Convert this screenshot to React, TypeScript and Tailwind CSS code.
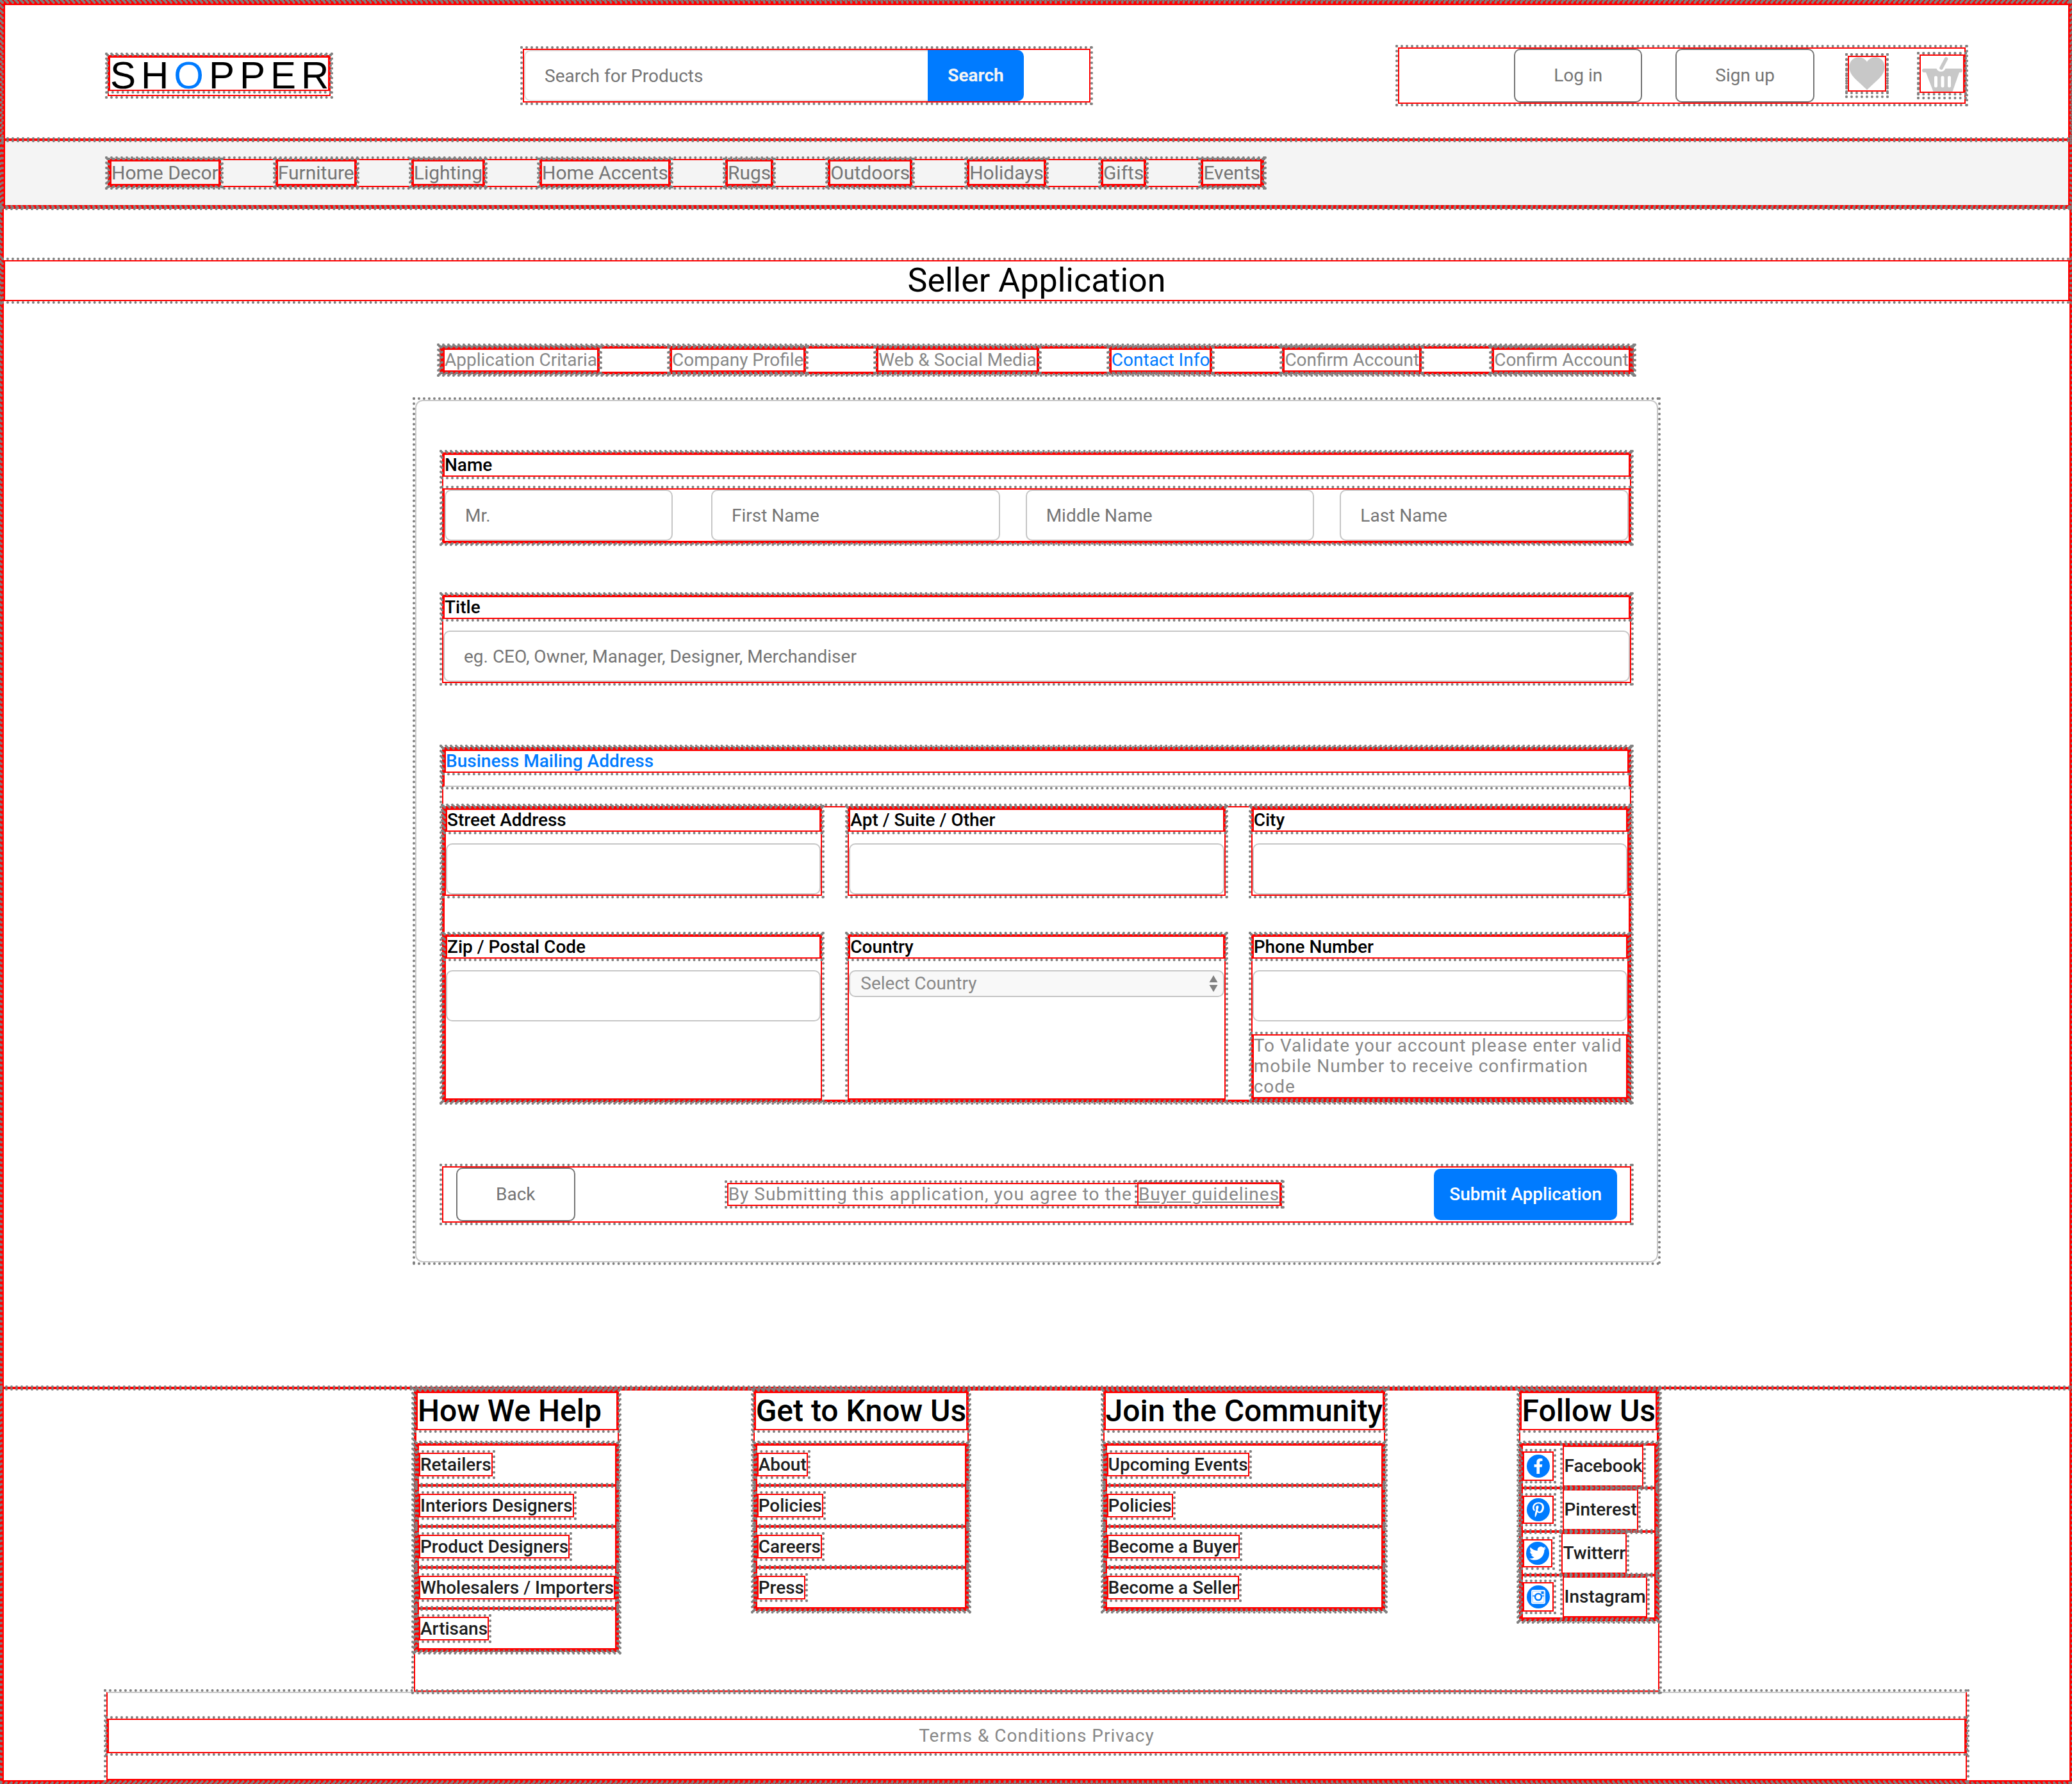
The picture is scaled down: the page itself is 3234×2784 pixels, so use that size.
import type { ReactNode } from "react";
import { FaFacebookF, FaPinterestP, FaTwitter } from "react-icons/fa";

const box = "border-2 border-[#ff0000] outline-4 outline-dotted outline-[#808080]";
const dots = "outline-4 outline-dotted outline-[#808080]";
const field =
  "h-20 w-full min-w-0 rounded-[10px] border-2 border-[#c6c6c6] bg-white px-[30px] text-[28px] text-black placeholder:text-[#757575]";
const outlineButton =
  "h-[84px] rounded-[10px] border-2 border-[#757575] bg-white px-[60px] text-[28px] text-[#757575]";

const navItems = ["Home Decor", "Furniture", "Lighting", "Home Accents", "Rugs", "Outdoors", "Holidays", "Gifts", "Events"];

const steps = [
  { label: "Application Critaria" },
  { label: "Company Profile" },
  { label: "Web & Social Media" },
  { label: "Contact Info", active: true },
  { label: "Confirm Account" },
  { label: "Confirm Account" },
];

const footerColumns = [
  {
    title: "How We Help",
    links: ["Retailers", "Interiors Designers", "Product Designers", "Wholesalers / Importers", "Artisans"],
  },
  { title: "Get to Know Us", links: ["About", "Policies", "Careers", "Press"] },
  { title: "Join the Community", links: ["Upcoming Events", "Policies", "Become a Buyer", "Become a Seller"] },
];

function HeartIcon() {
  return (
    <svg viewBox="0 0 56 52" className={`${box} h-14 w-[60px]`} aria-hidden="true">
      <path
        d="M28 51.5C26 49 22 45.500 16 40C6 31 0.500 25 0.500 15.500C0.500 6 7 0.500 15 0.500C21 0.500 25.500 3.500 28 7.500C30.500 3.500 35 0.500 41 0.500C49 0.500 55.500 6 55.500 15.500C55.500 25 50 31 40 40C34 45.500 30 49 28 51.5Z"
        fill="#c8c8c8"
      />
    </svg>
  );
}

function BasketIcon() {
  return (
    <svg viewBox="0 0 66 56" className={`${box} h-[60px] w-[70px]`} aria-hidden="true">
      <path
        d="M5 20H24.500A7.500 7.500 0 0 0 38.500 20H62A3 3 0 0 1 62 26H60L49.500 56H19.500L8 26H5A3 3 0 0 1 5 20Z"
        fill="#c8c8c8"
      />
      <path d="M39.500 5L32 19" stroke="#c8c8c8" strokeWidth="5.500" strokeLinecap="round" />
      <path d="M23.500 34V47M34 34V47M44.500 34V47" stroke="#fff" strokeWidth="5" strokeLinecap="round" />
    </svg>
  );
}

function InstagramMark() {
  return (
    <svg viewBox="0 0 24 24" className="size-6" aria-hidden="true">
      <rect x="1" y="1" width="22" height="22" rx="3" fill="#fff" />
      <rect x="3" y="3" width="18" height="18" rx="1.500" fill="none" stroke="#007bff" strokeWidth="0.800" opacity="0.500" />
      <path d="M3 10.500H7M17 10.500H21" stroke="#007bff" strokeWidth="1.500" />
      <circle cx="12" cy="12" r="5" fill="none" stroke="#007bff" strokeWidth="2.600" />
      <rect x="16.500" y="3.500" width="4" height="4" rx="0.500" fill="#007bff" />
    </svg>
  );
}

const social = [
  { label: "Facebook", frame: "w-12 h-[46px]", mark: <FaFacebookF className="size-6" /> },
  { label: "Pinterest", frame: "w-12 h-11", mark: <FaPinterestP className="size-6" /> },
  { label: "Twitterr", frame: "w-[46px] h-11", mark: <FaTwitter className="size-[26px]" /> },
  { label: "Instagram", frame: "w-12 h-[46px]", mark: <InstagramMark /> },
];

function Label({ htmlFor, children }: { htmlFor: string; children: ReactNode }) {
  return (
    <label htmlFor={htmlFor} className={`${box} block text-[28px] leading-8 font-medium`}>
      {children}
    </label>
  );
}

function AddressField({ id, label, children }: { id: string; label: string; children?: ReactNode }) {
  return (
    <div className={box}>
      <Label htmlFor={id}>{label}</Label>
      <input id={id} type="text" className={`${field} mt-[18px] block`} />
      {children}
    </div>
  );
}

function Header() {
  return (
    <div className={box}>
      <header className={`${box} flex items-center px-40 pt-[66px] pb-[54px]`}>
        <a href="#" className={`${box} h-16 w-[348px] shrink-0`}>
          <span
            className={`${box} block h-[54px] font-['Liberation_Sans',sans-serif] text-[60px] leading-[56px] tracking-[8px] whitespace-nowrap`}
          >
            SH<span className="text-[#007bff]">O</span>PPER
          </span>
        </a>
        <form className={`${box} ml-[300px] flex w-[886px]`}>
          <input
            type="text"
            aria-label="Search for Products"
            placeholder="Search for Products"
            className="h-20 w-[630px] rounded-l-[10px] border-2 border-r-0 border-[#dddddd] bg-white px-[30px] text-[28px] placeholder:text-[#757575]"
          />
          <button type="button" className="h-20 w-[150px] rounded-r-[10px] bg-[#007bff] text-[28px] font-bold text-[#f4f4f4]">
            Search
          </button>
        </form>
        <div className={`${box} ml-auto flex w-[886px] items-center justify-end gap-[52px]`}>
          <button type="button" className={outlineButton}>
            Log in
          </button>
          <button type="button" className={outlineButton}>
            Sign up
          </button>
          <a href="#" aria-label="Favourites" className={`${dots} block h-[62px]`}>
            <HeartIcon />
          </a>
          <a href="#" aria-label="Basket" className={`${dots} block h-[66px]`}>
            <BasketIcon />
          </a>
        </div>
      </header>
      <nav className={`${box} flex bg-[#f4f4f4] px-40 py-7`}>
        <ul className={`${box} flex gap-[85px]`}>
          {navItems.map((item) => (
            <li key={item} className={`${box} text-[30px] leading-9`}>
              <a href="#" className={`${box} text-[#757575]`}>
                {item}
              </a>
            </li>
          ))}
        </ul>
      </nav>
    </div>
  );
}

function Steps() {
  return (
    <div className={`${box} mx-auto mt-[70px] w-full max-w-[1864px]`}>
      <ul className={`${box} flex justify-between`}>
        {steps.map((step, i) => (
          <li key={i} className={`${box} text-[28px] leading-8`}>
            <a href="#" className={`${box} ${step.active ? "text-[#007bff]" : "text-[#888888]"}`}>
              {step.label}
            </a>
          </li>
        ))}
      </ul>
    </div>
  );
}

function ApplicationForm() {
  return (
    <div className={`${dots} mx-auto mt-10 w-full max-w-[1940px]`}>
      <form className="rounded-xl border-2 border-[#c8c8c8] px-10 pt-20 pb-[60px]">
        <div className={box}>
          <Label htmlFor="prefix">Name</Label>
          <div className={`${box} mt-[18px] grid grid-cols-[376px_1fr_1fr_1fr] gap-10`}>
            <div className="pr-5">
              <input id="prefix" type="text" placeholder="Mr." className={`${field} block`} />
            </div>
            <input type="text" aria-label="First Name" placeholder="First Name" className={field} />
            <input type="text" aria-label="Middle Name" placeholder="Middle Name" className={field} />
            <input type="text" aria-label="Last Name" placeholder="Last Name" className={field} />
          </div>
        </div>

        <div className={`${box} mt-20`}>
          <Label htmlFor="title">Title</Label>
          <input
            id="title"
            type="text"
            placeholder="eg. CEO, Owner, Manager, Designer, Merchandiser"
            className={`${field} mt-[18px] block`}
          />
        </div>

        <div className={`${box} mt-[100px]`}>
          <div className={`${box} border-b-[#c6c6c6] pb-5`}>
            <h2 className={`${box} text-[28px] leading-8 font-medium text-[#007bff]`}>Business Mailing Address</h2>
          </div>
          <div className={`${box} mt-[30px] grid grid-cols-3 gap-x-10 gap-y-[60px]`}>
            <AddressField id="street" label="Street Address" />
            <AddressField id="apt" label="Apt / Suite / Other" />
            <AddressField id="city" label="City" />
            <AddressField id="zip" label="Zip / Postal Code" />
            <div className={box}>
              <Label htmlFor="country">Country</Label>
              <div className="relative mt-[18px]">
                <select
                  id="country"
                  className="block h-[42px] w-full appearance-none rounded-[10px] border-2 border-[#c6c6c6] bg-[#f8f8f8] px-4 text-[28px] leading-8 text-[#888888]"
                >
                  <option>Select Country</option>
                </select>
                <svg viewBox="0 0 14 28" className="pointer-events-none absolute top-[7px] right-[10px] h-7 w-[14px]" aria-hidden="true">
                  <path d="M0.500 12L7 1L13.500 12ZM0.500 16L7 27L13.500 16Z" fill="#808080" />
                </svg>
              </div>
            </div>
            <AddressField id="phone" label="Phone Number">
              <p className={`${box} mt-5 text-[28px] leading-8 tracking-[1px] text-[#888888]`}>
                To Validate your account please enter valid mobile Number to receive confirmation code
              </p>
            </AddressField>
          </div>
        </div>

        <div className={`${box} mt-[100px] flex items-center justify-between px-5`}>
          <button type="button" className={outlineButton}>
            Back
          </button>
          <p className={`${box} text-[28px] leading-8 tracking-[1px] text-[#888888]`}>
            By Submitting this application, you agree to the{" "}
            <a href="#" className={`${box} underline`}>
              Buyer guidelines
            </a>
          </p>
          <button type="button" className="h-20 rounded-[10px] bg-[#007bff] px-6 text-[28px] font-medium text-white">
            Submit Application
          </button>
        </div>
      </form>
    </div>
  );
}

function Footer() {
  return (
    <footer className={box}>
      <div className={`${box} mx-auto flex w-full max-w-[1944px] items-start justify-between pb-[60px]`}>
        {footerColumns.map((column) => (
          <div key={column.title} className={box}>
            <h2 className={`${box} text-[48px] leading-[56px] font-medium`}>{column.title}</h2>
            <ul className={`${box} mt-5`}>
              {column.links.map((link) => (
                <li key={link} className={`${box} text-[28px] leading-[60px] font-medium`}>
                  <a href="#" className={`${box} text-[#1d1d1d]`}>
                    {link}
                  </a>
                </li>
              ))}
            </ul>
          </div>
        ))}
        <div className={box}>
          <h2 className={`${box} text-[48px] leading-[56px] font-medium`}>Follow Us</h2>
          <ul className={`${box} mt-5`}>
            {social.map((item) => (
              <li key={item.label} className={`${box} flex items-center gap-[14px]`}>
                <span className={`${box} ${item.frame} flex items-center justify-center`}>
                  <span className="flex size-9 items-center justify-center rounded-full bg-[#007bff] text-white">{item.mark}</span>
                </span>
                <a href="#" className={`${box} text-[28px] leading-[60px] font-medium text-[#1d1d1d]`}>
                  {item.label}
                </a>
              </li>
            ))}
          </ul>
        </div>
      </div>
      <div className={`${box} mx-40 border-t-[#c6c6c6] py-10`}>
        <p className={`${box} text-center text-[28px] leading-[50px] tracking-[1px] text-[#888888]`}>Terms &amp; Conditions Privacy</p>
      </div>
    </footer>
  );
}

export default function App() {
  return (
    <div className={`${box} border-r-0 bg-white font-[Roboto,sans-serif] text-black`}>
      <div className={box}>
        <Header />
        <main className={`${box} pb-[194px]`}>
          <h1 className={`${box} mt-20 text-center text-[52px] leading-[60px]`}>Seller Application</h1>
          <Steps />
          <ApplicationForm />
        </main>
        <Footer />
      </div>
    </div>
  );
}
